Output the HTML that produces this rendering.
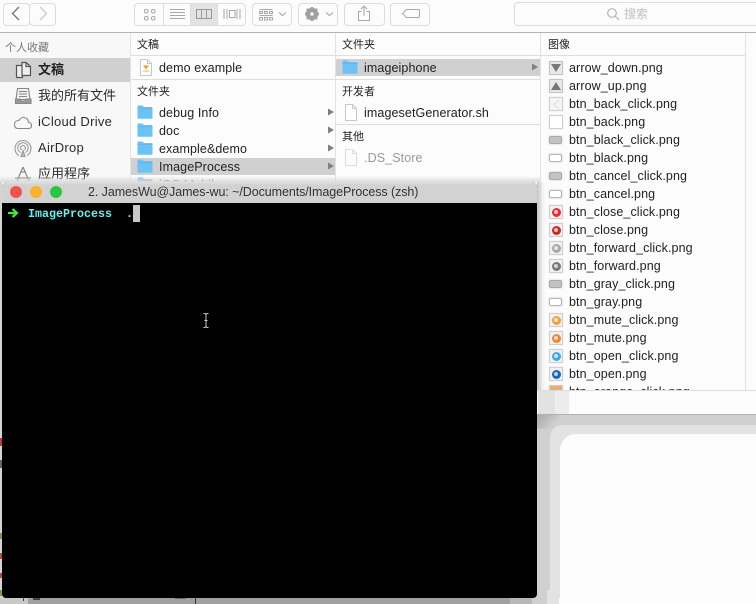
<!DOCTYPE html>
<html><head><meta charset="utf-8"><style>
html,body{margin:0;padding:0;width:756px;height:604px;overflow:hidden;background:#fcfcfc}
body{position:relative;font-family:"Liberation Sans","Noto Sans CJK SC",sans-serif;font-size:12.5px;color:#222}
.a{position:absolute}
.t{position:absolute;white-space:nowrap;line-height:16px;letter-spacing:.1px}
.s{position:absolute;white-space:nowrap;line-height:18px;font-size:13px;color:#2a2a2a}
.h{position:absolute;white-space:nowrap;line-height:16px;font-size:11px;color:#222}
.btn{position:absolute;top:3px;height:21px;border:1px solid #dcdcdc;border-radius:4px;background:#fcfcfc}
svg{position:absolute;overflow:visible}
.ic{position:absolute;left:549px;width:14px;height:14px;background:#f0f0f0;border:1px solid #cfcfcf;box-sizing:border-box;box-shadow:0 0 1px #ddd}
.r{position:absolute;left:549px;width:13px;height:8px;border:1px solid #b4b4b4;background:#fff;border-radius:2px;box-sizing:border-box;box-shadow:0 0 2px #ccc}
.gr{background:#c2c2c2;border-color:#a8a8a8}
.dot{position:absolute;left:1.500px;top:1.500px;width:9px;height:9px;border-radius:50%}
.dot:after{content:"";position:absolute;left:2.500px;top:2.500px;width:4px;height:4px;border-radius:50%;background:rgba(255,255,255,.7)}
</style></head><body>
<svg width="0" height="0" style="position:absolute"><defs>
<symbol id="f" viewBox="0 0 16 14"><path d="M.5 13V1.500q0-1 1-1h4l1.500 1.500h7.500q1 0 1 1V13q0 .8-.8.8H1.300q-.8 0-.8-.8z" fill="#6cc2f4"/><path d="M.5 3.400h15" stroke="#58b0e6" stroke-width=".6"/></symbol>
<symbol id="d" viewBox="0 0 14 17"><path d="M1.500.5h7l4 4v12h-11z" fill="#fff" stroke="#c8c8c8"/><path d="M8.500.5v4h4" fill="none" stroke="#c8c8c8"/></symbol>
</defs></svg>

<!-- toolbar -->
<div class="a" style="left:0;top:0;width:756px;height:32px;background:#fcfcfc;border-bottom:1px solid #b4b4b4"></div>
<div class="btn" style="left:3px;width:25px"></div>
<div class="btn" style="left:29px;width:25px"></div>
<svg style="left:0;top:0" width="60" height="30"><path d="M19 7l-6.500 6.500L19 20" fill="none" stroke="#777" stroke-width="1.400"/><path d="M40 7l6.500 6.500L40 20" fill="none" stroke="#ccc" stroke-width="1.400"/></svg>
<div class="btn" style="left:134px;width:110px"></div>
<div class="a" style="left:190px;top:4px;width:27px;height:21px;background:#e3e3e3"></div>
<div class="a" style="left:163px;top:4px;width:1px;height:21px;background:#dcdcdc"></div>
<div class="a" style="left:190px;top:4px;width:1px;height:21px;background:#dcdcdc"></div>
<div class="a" style="left:217px;top:4px;width:1px;height:21px;background:#dcdcdc"></div>
<svg style="left:0;top:0" width="250" height="30" fill="none" stroke="#a8a8a8">
<rect x="144.500" y="9.500" width="3.500" height="3.500" rx="1.500"/><rect x="151.500" y="9.500" width="3.500" height="3.500" rx="1.500"/><rect x="144.500" y="16.500" width="3.500" height="3.500" rx="1.500"/><rect x="151.500" y="16.500" width="3.500" height="3.500" rx="1.500"/>
<path d="M170 9.500h15M170 12.500h15M170 15.500h15M170 18.500h15"/>
<rect x="196.500" y="9.500" width="15" height="9" stroke="#999"/><path d="M201.500 9.500v9M206.500 9.500v9" stroke="#999"/>
<path d="M224 9v10M227 9v10M240 9v10M237 9v10" /><rect x="229.500" y="10.500" width="5.500" height="7"/>
</svg>
<div class="btn" style="left:252px;width:38px"></div>
<svg style="left:252px;top:0" width="40" height="30" fill="none" stroke="#a8a8a8"><path d="M7.500 9.500h13M7.500 15.500h13" /><rect x="7.500" y="11.500" width="3" height="2"/><rect x="12.500" y="11.500" width="3" height="2"/><rect x="17.500" y="11.500" width="3" height="2"/><rect x="7.500" y="17.500" width="3" height="2.500"/><rect x="12.500" y="17.500" width="3" height="2.500"/><rect x="17.500" y="17.500" width="3" height="2.500"/><path d="M27 12.500l3.500 3 3.500-3" stroke-width="1.100"/></svg>
<div class="btn" style="left:298px;width:38px"></div>
<svg style="left:298px;top:0" width="40" height="30"><circle cx="14" cy="14" r="4.500" fill="none" stroke="#a0a0a0" stroke-width="3.500"/><path d="M14 7v14M7 14h14M9 9l10 10M19 9L9 19" stroke="#a0a0a0" stroke-width="2.400"/><circle cx="14" cy="14" r="1.700" fill="#fcfcfc"/><path d="M28 12.500l3.500 3 3.500-3" fill="none" stroke="#a8a8a8" stroke-width="1.100"/></svg>
<div class="btn" style="left:344px;width:39px"></div>
<svg style="left:344px;top:0" width="40" height="30" fill="none" stroke="#a8a8a8"><path d="M17.500 11.500h-3v9h11v-9h-3M20 16V6M17 9l3-3 3 3"/></svg>
<div class="btn" style="left:390px;width:38px"></div>
<svg style="left:390px;top:0" width="40" height="30" fill="none" stroke="#a8a8a8"><path d="M16.500 9.500h12q1 0 1 1v6q0 1-1 1h-12l-4-4z"/></svg>
<div class="btn" style="left:514px;top:2px;width:260px;height:22px"></div>
<svg style="left:606px;top:7px" width="16" height="16" fill="none" stroke="#b4b4b4" stroke-width="1.200"><circle cx="6" cy="6" r="4.300"/><path d="M9 9l4 4"/></svg>
<div class="t" style="left:624px;top:6px;color:#c0c0c0;font-size:12px;letter-spacing:0">搜索</div>

<!-- sidebar -->
<div class="a" style="left:0;top:33px;width:130px;height:381px;background:#f8f8f8;border-right:1px solid #e4e4e4"></div>
<div class="h" style="left:5px;top:40px;color:#777">个人收藏</div>
<div class="a" style="left:0;top:58px;width:130px;height:24px;background:#d0d0d0"></div>
<svg style="left:14px;top:60px" width="20" height="20" fill="none" stroke="#555" stroke-width="1.200"><path d="M2.500 5.500h6v12h-6z" fill="#eee"/><path d="M8 2.500h4l4.500 4v9H8z" fill="#eee"/><path d="M12 2.500v4h4.500"/></svg>
<div class="s" style="left:38px;top:61px;font-weight:bold;color:#222">文稿</div>
<svg style="left:14px;top:87px" width="20" height="18" fill="none" stroke="#888" stroke-width="1.100"><path d="M3.500 1.500h11l1.500 11h-14z" fill="#f0f0f0"/><path d="M5 4.500h8M5 7h8M5 9.500h8"/><path d="M1.500 12h4.500l1 2h4l1-2h5v4.500h-15.500z" fill="#999"/></svg>
<div class="s" style="left:38px;top:87px">我的所有文件</div>
<svg style="left:13px;top:114px" width="20" height="16" fill="none" stroke="#888" stroke-width="1.100"><path d="M5 14.500h10.500q3 0 3-3t-3-3q-.5-5-5-5-3 0-4.500 3Q1.500 6.500 1.500 10.500q0 4 3.500 4z"/></svg>
<div class="s" style="left:38px;top:113px;letter-spacing:.28px">iCloud Drive</div>
<svg style="left:13px;top:139px" width="20" height="18" fill="none" stroke="#999" stroke-width="1.100"><path d="M6 16.500a8 8 0 1 1 8 0"/><path d="M7.500 13.500a5.200 5.200 0 1 1 5 0"/><path d="M8.500 11a2.500 2.500 0 1 1 3 0"/><path d="M8 17.500l2-6 2 6z" fill="#bbb"/></svg>
<div class="s" style="left:38px;top:139px;letter-spacing:.28px">AirDrop</div>
<svg style="left:13px;top:165px" width="20" height="17" fill="none" stroke="#888" stroke-width="1.200"><path d="M10 2L4 16M10 2l6 14M2 13h16M8 7h5"/></svg>
<div class="s" style="left:38px;top:165px">应用程序</div>

<!-- column lines -->
<div class="a" style="left:131px;top:55px;width:614px;height:1px;background:#dedede"></div>
<div class="a" style="left:335px;top:33px;width:1px;height:357px;background:#e2e2e2"></div>
<div class="a" style="left:540px;top:33px;width:1px;height:357px;background:#e2e2e2"></div>
<div class="a" style="left:745px;top:33px;width:1px;height:357px;background:#e2e2e2"></div>
<div class="a" style="left:131px;top:79px;width:204px;height:1px;background:#dedede"></div>
<div class="a" style="left:336px;top:79px;width:204px;height:1px;background:#dedede"></div>
<div class="a" style="left:336px;top:124px;width:204px;height:1px;background:#dedede"></div>

<!-- col 1 -->
<div class="h" style="left:137px;top:37px">文稿</div>
<svg style="left:139px;top:59px" width="14" height="17"><use href="#d" width="14" height="17"/><path d="M4 6.500h6l-3 4z" fill="#f0a020"/><path d="M4 12h6" stroke="#e0b060"/></svg>
<div class="t" style="left:159px;top:60px">demo example</div>
<div class="h" style="left:137px;top:84px">文件夹</div>
<svg style="left:137px;top:105px" width="16" height="14"><use href="#f" width="16" height="14"/></svg>
<div class="t" style="left:159px;top:105px">debug Info</div>
<svg style="left:137px;top:123px" width="16" height="14"><use href="#f" width="16" height="14"/></svg>
<div class="t" style="left:159px;top:123px">doc</div>
<svg style="left:137px;top:141px" width="16" height="14"><use href="#f" width="16" height="14"/></svg>
<div class="t" style="left:159px;top:141px">example&amp;demo</div>
<div class="a" style="left:131px;top:158px;width:204px;height:17px;background:#d0d0d0"></div>
<svg style="left:137px;top:159px" width="16" height="14"><use href="#f" width="16" height="14"/></svg>
<div class="t" style="left:159px;top:159px">ImageProcess</div>
<svg style="left:137px;top:177px" width="16" height="14"><use href="#f" width="16" height="14"/></svg>
<div class="t" style="left:159px;top:177px">iOS Mobile</div>
<svg style="left:326px;top:105px" width="10" height="80" fill="#808080"><path d="M2 3.500l6 3.500-6 3.500zM2 21.500l6 3.500-6 3.500zM2 39.500l6 3.500-6 3.500zM2 57.500l6 3.500-6 3.500z"/></svg>

<!-- col 2 -->
<div class="h" style="left:342px;top:37px">文件夹</div>
<div class="a" style="left:336px;top:59px;width:204px;height:17px;background:#d0d0d0"></div>
<svg style="left:342px;top:60px" width="16" height="14"><use href="#f" width="16" height="14"/></svg>
<div class="t" style="left:364px;top:60px">imageiphone</div>
<svg style="left:530px;top:60px" width="10" height="14" fill="#808080"><path d="M2 3.500l6 3.500-6 3.500z"/></svg>
<div class="h" style="left:342px;top:84px">开发者</div>
<svg style="left:344px;top:104px" width="14" height="17"><use href="#d" width="14" height="17"/></svg>
<div class="t" style="left:364px;top:105px">imagesetGenerator.sh</div>
<div class="h" style="left:342px;top:129px">其他</div>
<svg style="left:344px;top:149px;opacity:.6" width="14" height="17"><use href="#d" width="14" height="17"/></svg>
<div class="t" style="left:364px;top:150px;color:#999">.DS_Store</div>

<!-- col 3 -->
<div class="h" style="left:548px;top:37px">图像</div>
<div class="ic" style="top:61px;background:#e8e8e8;border-color:#c4c4c4"><svg style="left:1px;top:2px" width="10" height="9"><path d="M0 0h10L5 8z" fill="#777"/></svg></div>
<div class="ic" style="top:79px;background:#e8e8e8;border-color:#c4c4c4"><svg style="left:1px;top:2px" width="10" height="9"><path d="M0 8h10L5 0z" fill="#777"/></svg></div>
<div class="ic" style="top:97px;background:#f4f4f4"><svg style="left:2px;top:2px" width="9" height="9"><path d="M7 0L2 4.500 7 9" fill="none" stroke="#ddd"/></svg></div>
<div class="ic" style="top:115px;background:#fff"></div>
<div class="r gr" style="top:136px"></div>
<div class="r" style="top:154px"></div>
<div class="r gr" style="top:172px"></div>
<div class="r" style="top:190px"></div>
<div class="ic" style="top:205px"><div class="dot" style="background:#ea2e38"></div></div>
<div class="ic" style="top:223px"><div class="dot" style="background:#c82828"></div></div>
<div class="ic" style="top:241px"><div class="dot" style="background:#a8a8a8"></div></div>
<div class="ic" style="top:259px"><div class="dot" style="background:#777"></div></div>
<div class="r gr" style="top:280px"></div>
<div class="r" style="top:298px"></div>
<div class="ic" style="top:313px"><div class="dot" style="background:#f0a040"></div></div>
<div class="ic" style="top:331px"><div class="dot" style="background:#e88830"></div></div>
<div class="ic" style="top:349px"><div class="dot" style="background:#40a8e8"></div></div>
<div class="ic" style="top:367px"><div class="dot" style="background:#1868c0"></div></div>
<div class="ic" style="top:385px;background:#e8b070"></div>
<div class="t" style="left:569px;top:60px">arrow_down.png</div>
<div class="t" style="left:569px;top:78px">arrow_up.png</div>
<div class="t" style="left:569px;top:96px">btn_back_click.png</div>
<div class="t" style="left:569px;top:114px">btn_back.png</div>
<div class="t" style="left:569px;top:132px">btn_black_click.png</div>
<div class="t" style="left:569px;top:150px">btn_black.png</div>
<div class="t" style="left:569px;top:168px">btn_cancel_click.png</div>
<div class="t" style="left:569px;top:186px">btn_cancel.png</div>
<div class="t" style="left:569px;top:204px">btn_close_click.png</div>
<div class="t" style="left:569px;top:222px">btn_close.png</div>
<div class="t" style="left:569px;top:240px">btn_forward_click.png</div>
<div class="t" style="left:569px;top:258px">btn_forward.png</div>
<div class="t" style="left:569px;top:276px">btn_gray_click.png</div>
<div class="t" style="left:569px;top:294px">btn_gray.png</div>
<div class="t" style="left:569px;top:312px">btn_mute_click.png</div>
<div class="t" style="left:569px;top:330px">btn_mute.png</div>
<div class="t" style="left:569px;top:348px">btn_open_click.png</div>
<div class="t" style="left:569px;top:366px">btn_open.png</div>
<div class="t" style="left:569px;top:384px">btn_orange_click.png</div>

<!-- terminal side shadow over finder -->
<div class="a" style="left:537px;top:182px;width:9px;height:208px;background:linear-gradient(90deg,#c4c4c4,rgba(230,230,230,.5) 60%,rgba(252,252,252,0))"></div>
<div class="a" style="left:0;top:176px;width:540px;height:6px;background:linear-gradient(rgba(225,225,225,0),#dcdcdc)"></div>

<!-- finder bottom -->
<div class="a" style="left:0;top:390px;width:756px;height:24px;background:#fcfcfc;border-top:1px solid #dcdcdc;box-sizing:border-box"></div>
<div class="a" style="left:538px;top:391px;width:17px;height:23px;background:#e2e2e2"></div>
<div class="a" style="left:555px;top:391px;width:14px;height:23px;background:#ececec"></div>
<div class="a" style="left:0;top:414px;width:756px;height:1px;background:#b0b0b0"></div>
<!-- nested shadow bands -->
<div class="a" style="left:0;top:415px;width:756px;height:189px;background:#d0d0d0"></div>
<div class="a" style="left:537px;top:415px;width:22px;height:14px;background:linear-gradient(135deg,#a8a8a8 0,#bcbcbc 40%,rgba(208,208,208,0) 75%)"></div>
<div class="a" style="left:550px;top:425px;width:206px;height:179px;background:#e3e3e3;border-top-left-radius:12px"></div>
<div class="a" style="left:560px;top:434px;width:196px;height:170px;background:#fcfcfc;border-top-left-radius:16px"></div>

<!-- left strip -->
<div class="a" style="left:0;top:182px;width:2px;height:422px;background:#d4d4d4"></div>
<div class="a" style="left:0;top:438px;width:2px;height:8px;background:#b04040"></div>
<div class="a" style="left:0;top:460px;width:2px;height:8px;background:#666"></div>
<div class="a" style="left:0;top:533px;width:2px;height:6px;background:#7a9a50"></div>
<div class="a" style="left:0;top:553px;width:2px;height:6px;background:#b05040"></div>
<div class="a" style="left:0;top:573px;width:2px;height:5px;background:#b05040"></div>
<div class="a" style="left:0;top:590px;width:2px;height:6px;background:#7a9a50"></div>

<!-- bottom strip -->
<div class="a" style="left:0;top:598px;width:510px;height:6px;background:#a0a0a0"></div>
<div class="a" style="left:510px;top:598px;width:22px;height:6px;background:#b8b8b8"></div>
<div class="a" style="left:532px;top:598px;width:15px;height:6px;background:#d0d0d0"></div>
<div class="a" style="left:547px;top:590px;width:13px;height:14px;background:#e3e3e3"></div>
<div class="a" style="left:559px;top:598px;width:2px;height:6px;background:#fcfcfc"></div>
<div class="a" style="left:0;top:598px;width:28px;height:6px;background:#c8c8c8"></div>
<div class="a" style="left:23px;top:598px;width:1px;height:3px;background:#603040"></div>
<div class="a" style="left:33px;top:598px;width:7px;height:2px;background:#404060"></div>
<div class="a" style="left:175px;top:598px;width:11px;height:1px;background:#666"></div>
<div class="a" style="left:195px;top:598px;width:1px;height:6px;background:#333"></div>

<!-- terminal -->
<div class="a" style="left:2px;top:182px;width:535px;height:416px;background:#000;border-radius:5px 5px 4px 4px;overflow:hidden">
<div class="a" style="left:0;top:0;width:535px;height:21px;background:linear-gradient(#e0e0e0,#d2d2d2 3px)"></div>
</div>
<div class="a" style="left:10px;top:186px;width:12px;height:12px;border-radius:50%;background:#f4534d"></div>
<div class="a" style="left:30px;top:186px;width:12px;height:12px;border-radius:50%;background:#fcb12c"></div>
<div class="a" style="left:50px;top:186px;width:12px;height:12px;border-radius:50%;background:#2ac840"></div>
<div class="t" style="left:88px;top:184px;color:#333;letter-spacing:-.08px">2. JamesWu@James-wu: ~/Documents/ImageProcess (zsh)</div>
<svg style="left:7px;top:207px" width="12" height="12"><path d="M1 6h8M5.500 2l4.500 4-4.500 4" fill="none" stroke="#3fe83f" stroke-width="2.200"/></svg>
<div class="a" style="left:28px;top:206px;font:bold 11.67px/16px 'Liberation Mono',monospace;color:#5ff5f0;white-space:nowrap">ImageProcess</div>
<div class="a" style="left:126px;top:206px;font:bold 11.67px/16px 'Liberation Mono',monospace;color:#ddd;white-space:nowrap">.</div>
<div class="a" style="left:133px;top:205px;width:7px;height:17px;background:#c8c8c8"></div>
<svg style="left:201px;top:313px" width="10" height="16" fill="none" stroke="#ccc" stroke-width="1"><path d="M2.500 .5h1.500l1 1 1-1h1.500M5 1.500v12M2.500 14.500h1.500l1-1 1 1h1.500M3.500 7.500h3"/></svg>
</body></html>
